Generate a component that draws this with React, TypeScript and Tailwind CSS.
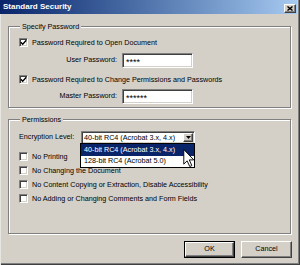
import React from "react";

const sunken =
  "bg-white border border-[#808080] border-r-white border-b-white shadow-[inset_1px_1px_0_#404040,inset_-1px_-1px_0_#d4d0c8]";
const raised =
  "bg-[#d4d0c8] border border-white border-r-[#404040] border-b-[#404040] shadow-[inset_-1px_-1px_0_#808080]";

function Check({ checked = false }: { checked?: boolean }) {
  return (
    <span className={`w-[9px] h-[9px] shrink-0 flex items-center justify-center ${sunken}`}>
      {checked && (
        <svg width="7" height="7" viewBox="0 0 7 7" className="shrink-0">
          <path d="M0.8 3.2 L2.7 5.2 L6.3 1.2" stroke="#000" strokeWidth="1.4" fill="none" />
        </svg>
      )}
    </span>
  );
}

function CheckRow({ label, checked, className = "" }: { label: string; checked?: boolean; className?: string }) {
  return (
    <div className={`flex items-center gap-[4px] h-[9px] ${className}`}>
      <Check checked={checked} />
      <span className="leading-[9px] whitespace-nowrap">{label}</span>
    </div>
  );
}

function Group({ title, className = "", children }: { title: string; className?: string; children: React.ReactNode }) {
  return (
    <div className={`relative border border-[#808080] shadow-[inset_1px_1px_0_#fff,1px_1px_0_#fff] ${className}`}>
      <div className="-mt-[5px] ml-[11px] w-fit px-[2px] bg-[#d4d0c8] leading-[9px] whitespace-nowrap">{title}</div>
      {children}
    </div>
  );
}

function PasswordRow({ label, value, className = "" }: { label: string; value: string; className?: string }) {
  return (
    <div className={`flex items-center ${className}`}>
      <span className="w-[108px] text-right whitespace-nowrap">{label}</span>
      <div className={`ml-[5px] w-[71px] h-[15px] flex items-center pl-[3px] ${sunken}`}>
        <span className="text-[9px] leading-[9px] pt-[3px]">{value}</span>
      </div>
    </div>
  );
}

export default function App() {
  return (
    <div className="w-[300px] h-[265px] bg-[#d4d0c8] text-black text-[7.2px] font-['Liberation_Sans',Arial,sans-serif] flex flex-col pr-[3px] shadow-[inset_1px_0_0_#e8e6e1,inset_-1px_-1px_0_#404040,inset_-2px_-2px_0_#808080] overflow-hidden">
      {/* title bar */}
      <div className="h-[14px] flex items-start bg-gradient-to-r from-[#0a246a] to-[#a6caf0]">
        <span className="ml-[3px] mt-[2px] text-white font-bold text-[8px] leading-[10px]">Standard Security</span>
        <div className={`ml-auto mr-[1px] mt-[4px] w-[12px] h-[9px] flex items-center justify-center ${raised}`}>
          <svg width="6" height="5" viewBox="0 0 6 5">
            <path d="M0.5 0.5 L5.5 4.5 M5.5 0.5 L0.5 4.5" stroke="#000" strokeWidth="1.4" />
          </svg>
        </div>
      </div>

      {/* Specify Password */}
      <Group title="Specify Password" className="ml-[8px] mt-[12px] w-[283px] h-[82px]">
        <div className="pl-[10px]">
          <CheckRow label="Password Required to Open Document" checked className="mt-[7px]" />
        </div>
        <PasswordRow label="User Password:" value="****" className="mt-[6px]" />
        <div className="pl-[10px]">
          <CheckRow label="Password Required to Change Permissions and Passwords" checked className="mt-[7px]" />
        </div>
        <PasswordRow label="Master Password:" value="******" className="mt-[5px]" />
      </Group>

      {/* Permissions */}
      <Group title="Permissions" className="ml-[8px] mt-[11px] w-[283px] h-[115px]">
        <div className="pl-[10px] flex items-center mt-[7px]">
          <span className="w-[62px] whitespace-nowrap">Encryption Level:</span>
          <div className="relative">
            <div className={`w-[114px] h-[13px] flex items-center ${sunken}`}>
              <span className="pl-[2px] whitespace-nowrap leading-[9px]">40-bit RC4 (Acrobat 3.x, 4.x)</span>
              <div className={`ml-auto mr-[1px] w-[10px] h-[9px] flex items-center justify-center shrink-0 ${raised}`}>
                <svg width="5" height="3" viewBox="0 0 5 3">
                  <path d="M0 0 H5 L2.5 3 Z" fill="#000" />
                </svg>
              </div>
            </div>
            {/* open dropdown list */}
            <div className="absolute left-[-1px] top-[12px] w-[115px] bg-white border border-black z-10">
              <div className="h-[12px] bg-[#0a246a] text-white flex items-center pl-[3px] whitespace-nowrap">
                40-bit RC4 (Acrobat 3.x, 4.x)
              </div>
              <div className="h-[11px] flex items-center pl-[3px] whitespace-nowrap">128-bit RC4 (Acrobat 5.0)</div>
              <svg width="12" height="18" viewBox="0 0 12 19" className="absolute left-[102px] top-[5px]">
                <path d="M0.5 0.5 V16 L4 12.5 L6.8 18.5 L9 17.5 L6.3 11.5 H11 Z" fill="#fff" stroke="#000" strokeWidth="1" />
              </svg>
            </div>
          </div>
        </div>
        <div className="pl-[10px] flex flex-col gap-[5px] mt-[8px]">
          <CheckRow label="No Printing" />
          <CheckRow label="No Changing the Document" />
          <CheckRow label="No Content Copying or Extraction, Disable Accessibility" />
          <CheckRow label="No Adding or Changing Comments and Form Fields" />
        </div>
      </Group>

      {/* buttons */}
      <div className="flex justify-end gap-[6px] mt-[7px] pr-[5px]">
        <div className="w-[51px] h-[17px] border border-black">
          <div className={`w-full h-full flex items-center justify-center ${raised}`}>OK</div>
        </div>
        <div className={`w-[51px] h-[17px] flex items-center justify-center ${raised}`}>Cancel</div>
      </div>
    </div>
  );
}
